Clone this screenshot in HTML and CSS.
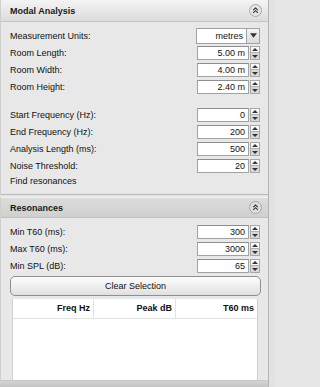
FILE: index.html
```html
<!DOCTYPE html>
<html>
<head>
<meta charset="utf-8">
<link rel="stylesheet" href="styles.css">
</head>
<body>
<div class="frame">
  <div class="column">
    <section class="panel">
      <header class="panel-head">
        <span class="panel-title">Modal Analysis</span>
        <span class="collapse"><svg viewBox="0 0 13 13" width="13" height="13"><circle cx="6.5" cy="6.5" r="6" fill="#e4e4e4" stroke="#a8a8a8"/><path d="M4.2 6.1 L6.5 4 L8.8 6.1 M4.2 8.8 L6.5 6.7 L8.8 8.8" fill="none" stroke="#333" stroke-width="1.1"/></svg></span>
      </header>
      <div class="panel-body">
        <div class="group">
          <div class="row"><span class="label">Measurement Units:</span>
            <span class="select"><span class="select-val">metres</span><span class="select-btn"><svg viewBox="0 0 8 5" width="7" height="5"><path d="M0 0 H8 L4 5 Z" fill="#333"/></svg></span></span></div>
          <div class="row"><span class="label">Room Length:</span><span class="spin"><span class="spin-val">5.00 m</span><span class="spin-btns"><span class="up"></span><span class="down"></span></span></span></div>
          <div class="row"><span class="label">Room Width:</span><span class="spin"><span class="spin-val">4.00 m</span><span class="spin-btns"><span class="up"></span><span class="down"></span></span></span></div>
          <div class="row"><span class="label">Room Height:</span><span class="spin"><span class="spin-val">2.40 m</span><span class="spin-btns"><span class="up"></span><span class="down"></span></span></span></div>
        </div>
        <div class="group group-2">
          <div class="row"><span class="label">Start Frequency (Hz):</span><span class="spin"><span class="spin-val">0</span><span class="spin-btns"><span class="up"></span><span class="down"></span></span></span></div>
          <div class="row"><span class="label">End Frequency (Hz):</span><span class="spin"><span class="spin-val">200</span><span class="spin-btns"><span class="up"></span><span class="down"></span></span></span></div>
          <div class="row"><span class="label">Analysis Length (ms):</span><span class="spin"><span class="spin-val">500</span><span class="spin-btns"><span class="up"></span><span class="down"></span></span></span></div>
          <div class="row"><span class="label">Noise Threshold:</span><span class="spin"><span class="spin-val">20</span><span class="spin-btns"><span class="up"></span><span class="down"></span></span></span></div>
          <div class="row row-find"><span class="label">Find resonances</span></div>
        </div>
      </div>
    </section>
    <section class="panel panel-2">
      <header class="panel-head head-2">
        <span class="panel-title">Resonances</span>
        <span class="collapse"><svg viewBox="0 0 13 13" width="13" height="13"><circle cx="6.5" cy="6.5" r="6" fill="#dedede" stroke="#a8a8a8"/><path d="M4.2 6.1 L6.5 4 L8.8 6.1 M4.2 8.8 L6.5 6.7 L8.8 8.8" fill="none" stroke="#333" stroke-width="1.1"/></svg></span>
      </header>
      <div class="panel-body body-2">
        <div class="row"><span class="label">Min T60 (ms):</span><span class="spin"><span class="spin-val">300</span><span class="spin-btns"><span class="up"></span><span class="down"></span></span></span></div>
        <div class="row"><span class="label">Max T60 (ms):</span><span class="spin"><span class="spin-val">3000</span><span class="spin-btns"><span class="up"></span><span class="down"></span></span></span></div>
        <div class="row"><span class="label">Min SPL (dB):</span><span class="spin"><span class="spin-val">65</span><span class="spin-btns"><span class="up"></span><span class="down"></span></span></span></div>
        <button class="btn">Clear Selection</button>
        <div class="table">
          <div class="thead">
            <span class="th">Freq Hz</span>
            <span class="th">Peak dB</span>
            <span class="th">T60 ms</span>
          </div>
          <div class="tbody">
            <span class="td"></span><span class="td"></span><span class="td"></span>
          </div>
        </div>
      </div>
    </section>
    <div class="bottom-strip"></div>
  </div>
  <div class="side-strip"></div>
</div>
</body>
</html>
```
FILE: styles.css
```css
html, body {
  margin: 0;
  padding: 0;
}
body {
  width: 275px;
  height: 387px;
  overflow: hidden;
  background: #e6e6e6;
  font-family: "Liberation Sans", Arial, sans-serif;
  font-size: 9px;
  color: #111;
}
.frame {
  display: flex;
  height: 387px;
}
.column {
  width: 268px;
  display: flex;
  flex-direction: column;
}
.side-strip {
  width: 6px;
  border-left: 1px solid #b4b4b4;
  background: #e2e2e2;
}
.panel {
  background: #e8e8e8;
  border-left: 1px solid #cfcfcf;
}
.panel-head {
  height: 21px;
  display: flex;
  align-items: center;
  justify-content: space-between;
  padding: 0 6px 0 9px;
  background: linear-gradient(#f4f4f4, #dcdcdc);
  border-bottom: 1px solid #c4c4c4;
}
.head-2 {
  height: 19px;
  background: linear-gradient(#dcdcdc, #d0d0d0);
  border-top: 1px solid #f2f2f2;
  border-bottom: 1px solid #c0c0c0;
}
.panel-title {
  font-weight: bold;
  font-size: 9px;
  color: #1a1a1a;
}
.collapse {
  display: flex;
}
.panel-body {
  padding: 5px 8px 6px 9px;
}
.panel:first-child {
  border-bottom: 1px solid #b8b8b8;
}
.panel-2 {
  margin-top: 2px;
}
.group-2 {
  margin-top: 11px;
}
.row {
  height: 17px;
  display: flex;
  align-items: center;
  justify-content: space-between;
}
.row-find {
  height: 14px;
}
.label {
  white-space: nowrap;
}
.select {
  width: 62px;
  height: 14px;
  display: flex;
  border: 1px solid #a2a2a2;
  background: #fff;
}
.select-val {
  flex: 1;
  text-align: right;
  padding-right: 3px;
  line-height: 14px;
}
.select-btn {
  width: 12px;
  border-left: 1px solid #a2a2a2;
  background: linear-gradient(#f4f4f4, #dcdcdc);
  display: flex;
  align-items: center;
  justify-content: center;
}
.spin {
  width: 63px;
  height: 14px;
  display: flex;
}
.spin-val {
  flex: 1;
  border: 1px solid #a2a2a2;
  border-top-color: #8e8e8e;
  background: #fff;
  text-align: right;
  padding-right: 3px;
  line-height: 12px;
}
.spin-btns {
  width: 8px;
  margin-left: 1px;
  display: flex;
  flex-direction: column;
  border: 1px solid #a8a8a8;
}
.up, .down {
  flex: 1;
  position: relative;
  background: #fafafa;
}
.down {
  background: #d8d8d8;
  border-top: 1px solid #b0b0b0;
}
.up::after, .down::after {
  content: "";
  position: absolute;
  left: 1px;
  border-left: 3px solid transparent;
  border-right: 3px solid transparent;
}
.up::after {
  top: 1px;
  border-bottom: 3px solid #333;
}
.down::after {
  top: 2px;
  border-top: 3px solid #333;
}
.body-2 {
  padding-top: 5px;
  padding-bottom: 0;
  padding-left: 9px;
  padding-right: 8px;
}
.btn {
  display: block;
  width: 251px;
  height: 20px;
  margin: 2px 0 0 0;
  border: 1px solid #8f8f8f;
  border-radius: 5px;
  background: linear-gradient(#fdfdfd, #e0e0e0);
  font-family: "Liberation Sans", Arial, sans-serif;
  font-size: 9px;
  color: #111;
  padding: 0;
}
.table {
  margin: 3px 2px 0 2px;
  height: 81px;
  background: #fff;
  border-left: 1px solid #d0d0d0;
  border-right: 1px solid #d0d0d0;
  display: flex;
  flex-direction: column;
}
.thead, .tbody {
  display: grid;
  grid-template-columns: 81px 82px 1fr;
}
.thead {
  height: 19px;
  border-bottom: 1px solid #e2e2e2;
}
.tbody {
  flex: 1;
}
.th {
  font-weight: bold;
  text-align: right;
  padding-right: 3px;
  line-height: 19px;
  border-right: 1px solid #e2e2e2;
}
.th:last-child {
  border-right: none;
}
.bottom-strip {
  flex: 1;
  background: linear-gradient(#d4d4d4, #c4c4c4);
  border-top: 1px solid #c8c8c8;
}
```
